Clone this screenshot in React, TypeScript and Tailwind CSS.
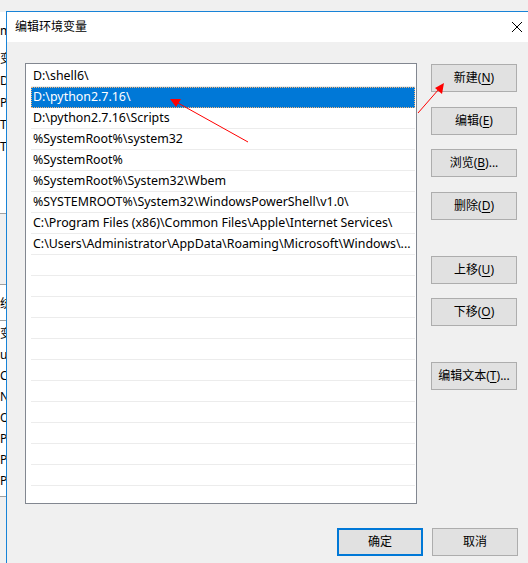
const paths = [
  'D:\\shell6\\',
  'D:\\python2.7.16\\',
  'D:\\python2.7.16\\Scripts',
  '%SystemRoot%\\system32',
  '%SystemRoot%',
  '%SystemRoot%\\System32\\Wbem',
  '%SYSTEMROOT%\\System32\\WindowsPowerShell\\v1.0\\',
  'C:\\Program Files (x86)\\Common Files\\Apple\\Internet Services\\',
  'C:\\Users\\Administrator\\AppData\\Roaming\\Microsoft\\Windows\\...',
]

const font = "font-['Segoe_UI','Noto_Sans','Noto_Sans_CJK_SC',sans-serif]"

function WinButton({ label, hotkey, tail = '', primary = false }: { label: string; hotkey?: string; tail?: string; primary?: boolean }) {
  return (
    <button
      className={`flex h-[28px] w-[86px] items-center justify-center bg-[#e1e1e1] text-[12px] text-black ${
        primary ? 'border-2 border-[#0078d7]' : 'border border-[#adadad]'
      }`}
    >
      {label}
      {hotkey && (
        <span>
          (<span className="underline underline-offset-2">{hotkey}</span>){tail}
        </span>
      )}
    </button>
  )
}

// the window underneath, only a sliver of it shows at the left
function BehindWindow() {
  const top = ['变', 'D', 'Pa', 'TE', 'TM']
  const bottom = ['变', 'us', 'Co', 'N', 'O', 'Pa', 'PA', 'PF']
  return (
    <div className="flex w-[6px] shrink-0 flex-col overflow-hidden text-[12px] text-black">
      <div className="h-[12px] bg-[#f0f0f0]" />
      <div className="h-[201px] bg-white pt-[8px] leading-[22px]">
        <div className="h-[28px] whitespace-nowrap leading-[21px]">m</div>
        {top.map((t, i) => (
          <div key={i} className="h-[22px] whitespace-nowrap">{t}</div>
        ))}
      </div>
      <div className="h-[71px] border-t border-[#a0a0a0] bg-[#f0f0f0]" />
      <div className="h-[36px] whitespace-nowrap border-t border-[#a0a0a0] bg-white pt-[9px] leading-[20px]">统</div>
      <div className="h-[176px] border-t border-[#a0a0a0] bg-white pt-[2px] leading-[21px]">
        {bottom.map((t, i) => (
          <div key={i} className="h-[21px] whitespace-nowrap">{t}</div>
        ))}
      </div>
      <div className="flex-1 border-t border-[#a0a0a0] bg-[#f0f0f0]" />
    </div>
  )
}

function PathList() {
  const rows = Array.from({ length: 21 }, (_, i) => paths[i] ?? '')
  return (
    <div className="h-[441px] w-[392px] overflow-hidden border border-[#828790] bg-white pl-[5px] pr-[1px] pt-[2px]">
      {rows.map((p, i) => (
        <div
          key={i}
          className={`flex h-[21px] items-center whitespace-nowrap border-b pl-[2px] text-[12.4px] ${
            i === 1
              ? 'border-b-[#0078d7] bg-[#0078d7] text-white outline-1 outline-dotted outline-offset-[-1px] outline-[#f4b57a]'
              : 'border-b-[#ececec] text-black'
          }`}
        >
          {p}
        </div>
      ))}
    </div>
  )
}

function Arrows() {
  return (
    <svg className="pointer-events-none absolute left-0 top-0" width="528" height="563">
      <line x1="248" y1="142" x2="178" y2="103" stroke="#ff0000" strokeWidth="1" />
      <polygon points="170,99 181,99 176,107" fill="#ff0000" />
      <line x1="418" y1="113" x2="439" y2="89" stroke="#ff0000" strokeWidth="1" />
      <polygon points="444,83 442,94 435,88" fill="#ff0000" />
    </svg>
  )
}

export default function App() {
  return (
    <div className={`relative flex h-[563px] w-[528px] overflow-hidden bg-[#f0f0f0] ${font}`}>
      <BehindWindow />
      <div className="mt-[11px] flex flex-1 flex-col border-l border-t border-[#1883d7]">
        <div className="flex h-[30px] items-center justify-between bg-white pl-[8px] pr-[4px] text-[12px] text-black">
          <span>编辑环境变量</span>
          <svg width="12" height="12" viewBox="0 0 12 12" className="mr-[1px]">
            <path d="M1 1L11 11M11 1L1 11" stroke="#000" strokeWidth="1" />
          </svg>
        </div>
        <div className="flex flex-1 flex-col bg-[#f0f0f0]">
          <div className="flex gap-[14px] pl-[18px] pt-[21px]">
            <PathList />
            <div className="flex flex-col pt-[1px]">
              <WinButton label="新建" hotkey="N" />
              <div className="mt-[15px]"><WinButton label="编辑" hotkey="E" /></div>
              <div className="mt-[14px]"><WinButton label="浏览" hotkey="B" tail="..." /></div>
              <div className="mt-[15px]"><WinButton label="删除" hotkey="D" /></div>
              <div className="mt-[36px]"><WinButton label="上移" hotkey="U" /></div>
              <div className="mt-[14px]"><WinButton label="下移" hotkey="O" /></div>
              <div className="mt-[36px]"><WinButton label="编辑文本" hotkey="T" tail="..." /></div>
            </div>
          </div>
          <div className="flex justify-end gap-[9px] pr-[10px] pt-[24px]">
            <WinButton label="确定" primary />
            <WinButton label="取消" />
          </div>
        </div>
      </div>
      <Arrows />
    </div>
  )
}
